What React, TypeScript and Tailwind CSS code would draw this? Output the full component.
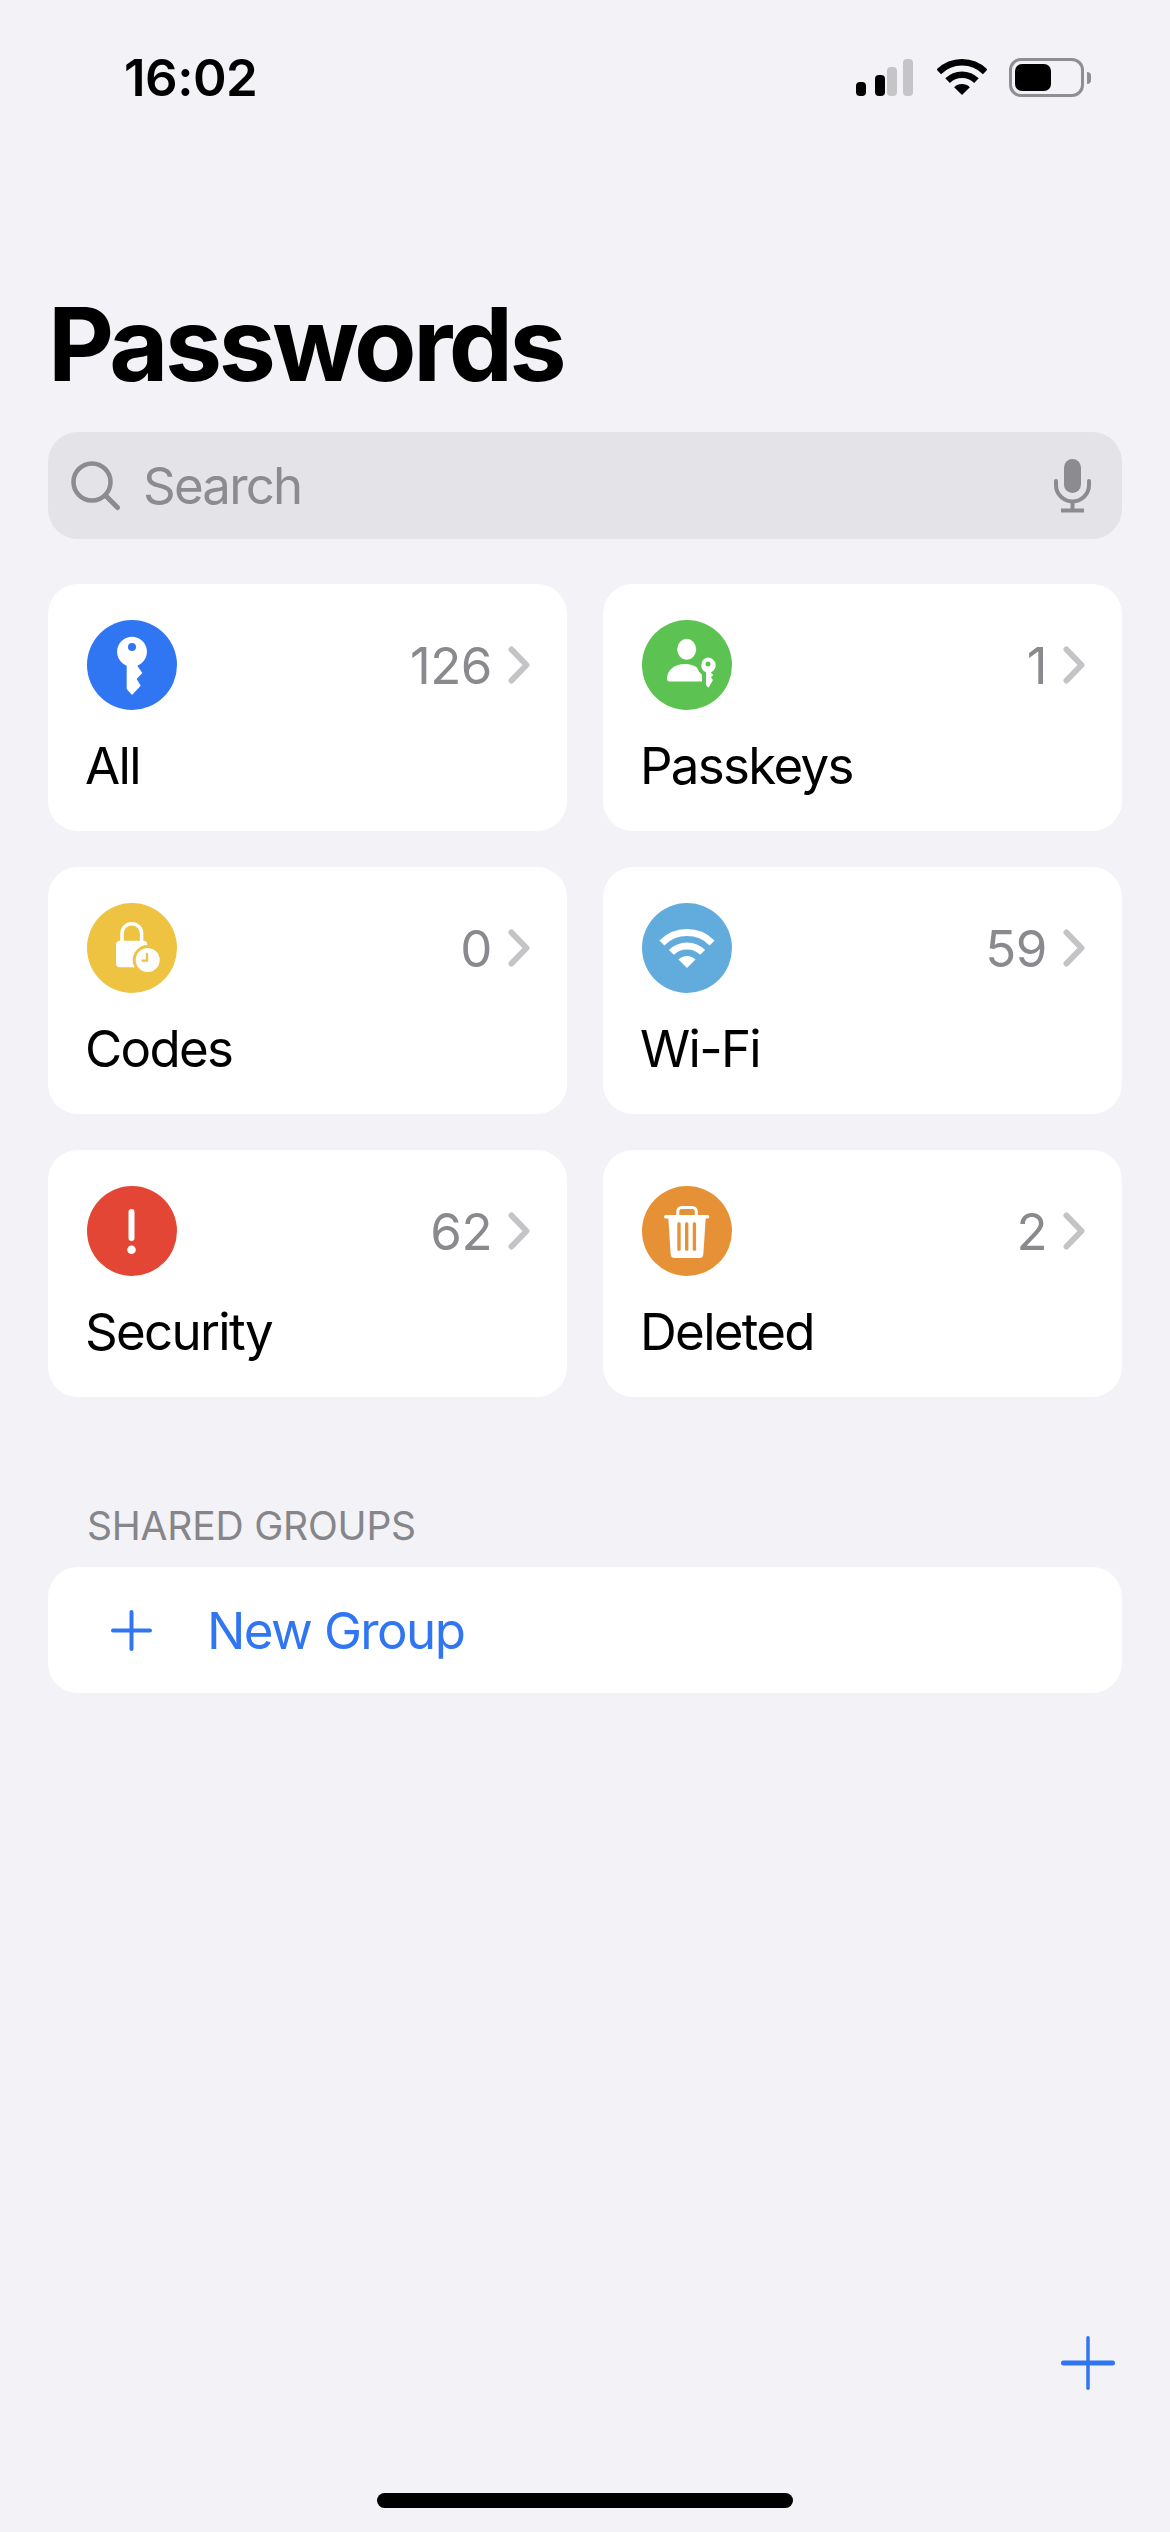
import React from "react";

const font = { fontFamily: "Inter, 'Liberation Sans', sans-serif" };

function Chevron() {
  return (
    <svg width="22" height="38" viewBox="0 0 22 38" fill="none" className="shrink-0">
      <path d="M3.500 3.500 L18.500 19 L3.500 34.500" stroke="#c4c4c7" strokeWidth="6" strokeLinecap="round" strokeLinejoin="round" />
    </svg>
  );
}

function KeyIcon() {
  return (
    <svg width="90" height="90" viewBox="0 0 90 90" className="block">
      <circle cx="45" cy="45" r="45" fill="#3076f3" />
      <path
        fillRule="evenodd"
        fill="#fff"
        d="M45 16.700a15 15 0 0 1 5.300 29L55.300 53 49.700 59 53.700 65.700 45 75 39.700 69V45.700A15 15 0 0 1 45 16.700ZM45 23a4 4 0 1 0 0 8 4 4 0 0 0 0-8Z"
      />
    </svg>
  );
}

function PasskeyIcon() {
  return (
    <svg width="90" height="90" viewBox="0 0 90 90" className="block">
      <circle cx="45" cy="45" r="45" fill="#5cc251" />
      <ellipse cx="44.700" cy="29.300" rx="9.500" ry="10.500" fill="#fff" />
      <path d="M25 58.500C25 50 33 44 43 44c9 0 17.700 5 17.700 14.500v3H27.500C25.800 61.500 25 60.300 25 58.500Z" fill="#fff" />
      <circle cx="66" cy="45.300" r="11" fill="#5cc251" />
      <path d="M62 50h9v14l-4.300 4-4.700-4.500Z" fill="#5cc251" stroke="#5cc251" strokeWidth="4" />
      <path
        fillRule="evenodd"
        fill="#fff"
        d="M66 37.600a7.700 7.700 0 0 1 2.700 14.900L71.200 55 69 57.500 71 60 66.500 67.700 64 65V52.300A7.700 7.700 0 0 1 66 37.600ZM66 41.500a2.500 2.500 0 1 0 0 5 2.500 2.500 0 0 0 0-5Z"
      />
    </svg>
  );
}

function LockIcon() {
  return (
    <svg width="90" height="90" viewBox="0 0 90 90" className="block">
      <circle cx="45" cy="45" r="45" fill="#edc341" />
      <path d="M35 40V30.500a9.800 9.800 0 0 1 19.600 0V40" fill="none" stroke="#fff" strokeWidth="3.500" />
      <rect x="29" y="37.700" width="31.300" height="26.600" rx="4" fill="#fff" />
      <circle cx="60.700" cy="57" r="15" fill="#edc341" />
      <circle cx="60.700" cy="57" r="12" fill="#fff" />
      <path d="M60 50v7.700h-5.500" fill="none" stroke="#edc341" strokeWidth="2.200" />
    </svg>
  );
}

function WifiGlyph({ color, width, height }: { color: string; width: number; height: number }) {
  return (
    <svg width={width} height={height} viewBox="18 26 54 40" className="block">
      <path d="M19.900 39.900A35.500 35.500 0 0 1 70.100 39.900" fill="none" stroke={color} strokeWidth="7" />
      <path d="M29.400 49.400A22 22 0 0 1 60.600 49.400" fill="none" stroke={color} strokeWidth="7" />
      <path d="M45 65 36.500 56.500A12 12 0 0 1 53.500 56.500Z" fill={color} />
    </svg>
  );
}

function WifiIcon() {
  return (
    <svg width="90" height="90" viewBox="0 0 90 90" className="block">
      <circle cx="45" cy="45" r="45" fill="#62acdd" />
      <path d="M19.900 39.900A35.500 35.500 0 0 1 70.100 39.900" fill="none" stroke="#fff" strokeWidth="7" />
      <path d="M29.400 49.400A22 22 0 0 1 60.600 49.400" fill="none" stroke="#fff" strokeWidth="7" />
      <path d="M45 65 36.500 56.500A12 12 0 0 1 53.500 56.500Z" fill="#fff" />
    </svg>
  );
}

function AlertIcon() {
  return (
    <svg width="90" height="90" viewBox="0 0 90 90" className="block">
      <circle cx="45" cy="45" r="45" fill="#e34635" />
      <rect x="41.500" y="23" width="6" height="32" rx="3" fill="#fff" />
      <circle cx="44.500" cy="63.700" r="4.300" fill="#fff" />
    </svg>
  );
}

function TrashIcon() {
  return (
    <svg width="90" height="90" viewBox="0 0 90 90" className="block">
      <circle cx="45" cy="45" r="45" fill="#e79136" />
      <path d="M35.800 30v-4.500a4 4 0 0 1 4-4h10.500a4 4 0 0 1 4 4V30" fill="none" stroke="#fff" strokeWidth="3" />
      <rect x="22" y="29" width="45.300" height="3.400" rx="1.700" fill="#fff" />
      <path d="M26.300 32h37.400l-2.400 36.500a4 4 0 0 1-4 3.500H32.700a4 4 0 0 1-4-3.500Z" fill="#fff" />
      <rect x="35.300" y="36.300" width="3.400" height="28.400" rx="1.500" fill="#e79136" />
      <rect x="43" y="36.300" width="3.400" height="28.400" rx="1.500" fill="#e79136" />
      <rect x="50.700" y="36.300" width="3.400" height="28.400" rx="1.500" fill="#e79136" />
    </svg>
  );
}

const cards = [
  { label: "All", count: "126", icon: <KeyIcon /> },
  { label: "Passkeys", count: "1", icon: <PasskeyIcon /> },
  { label: "Codes", count: "0", icon: <LockIcon /> },
  { label: "Wi-Fi", count: "59", icon: <WifiIcon /> },
  { label: "Security", count: "62", icon: <AlertIcon /> },
  { label: "Deleted", count: "2", icon: <TrashIcon /> },
];

function Plus({ size, stroke, vStroke }: { size: number; stroke: number; vStroke: number }) {
  return (
    <svg width={size} height={size} viewBox={`0 0 ${size} ${size}`} className="block shrink-0" fill="none">
      <path d={`M${size / 2} ${vStroke / 2}V${size - vStroke / 2}`} stroke="#3076f3" strokeWidth={vStroke} strokeLinecap="round" />
      <path d={`M${stroke / 2} ${size / 2}H${size - stroke / 2}`} stroke="#3076f3" strokeWidth={stroke} strokeLinecap="round" />
    </svg>
  );
}

export default function App() {
  return (
    <div className="w-[1170px] h-[2532px] bg-[#f2f2f7] flex flex-col overflow-hidden text-black" style={font}>
      <div className="h-[152px] pl-[124px] pr-[79px] pt-[53px] flex justify-between items-start shrink-0">
        <span className="text-[51px] leading-[50px] font-semibold tracking-[-0.5px]">16:02</span>
        <div className="flex items-start pt-[6px]">
          <div className="flex items-end gap-[9px] h-[37px] w-[58px]">
            <span className="w-[10px] h-[14px] rounded-[4px] bg-black" />
            <span className="w-[10px] h-[21px] rounded-[4px] bg-black" />
            <span className="w-[10px] h-[29px] rounded-[4px] bg-[#c5c5c7] -ml-[7px]" />
            <span className="w-[10px] h-[37px] rounded-[4px] bg-[#c5c5c7] -ml-[3px]" />
          </div>
          <div className="ml-[23px]">
            <WifiGlyph color="#000" width={50} height={37} />
          </div>
          <div className="ml-[22px] flex items-center -mt-px">
            <div className="w-[75px] h-[39px] rounded-[12px] border-[3px] border-[#8e8e93] p-[3px]">
              <div className="w-[36px] h-full rounded-[7px] bg-black" />
            </div>
            <div className="w-[4px] h-[12px] ml-[3px] rounded-r-[4px] bg-[#8e8e93]" />
          </div>
        </div>
      </div>

      <div className="px-[48px] flex flex-col flex-1">
        <h1 className="text-[102px] leading-[124px] font-bold mt-[130px] tracking-[-3.5px]">Passwords</h1>

        <div className="mt-[26px] h-[107px] rounded-[30px] bg-[#e3e3e8] flex items-center pl-[23px] pr-[31px] shrink-0">
          <svg width="50" height="50" viewBox="0 0 50 50" fill="none" className="shrink-0">
            <circle cx="21" cy="21" r="18.500" stroke="#8b8b90" strokeWidth="4.500" />
            <path d="M34.500 34.500 46.500 46.500" stroke="#8b8b90" strokeWidth="5" strokeLinecap="round" />
          </svg>
          <span className="ml-[22px] text-[51px] leading-[61px] text-[#8b8b90] flex-1 tracking-[-1.8px]">Search</span>
          <svg width="37" height="54" viewBox="0 0 37 54" fill="none" className="shrink-0">
            <rect x="10" y="0" width="17" height="34" rx="8.500" fill="#8b8b90" />
            <path d="M2 22v4a16.500 16.500 0 0 0 33 0v-4" stroke="#8b8b90" strokeWidth="4" strokeLinecap="round" />
            <path d="M18.500 43v8M7 51.500h23" stroke="#8b8b90" strokeWidth="4" />
          </svg>
        </div>

        <div className="mt-[45px] grid grid-cols-2 gap-x-[36px] gap-y-[36px] shrink-0">
          {cards.map((c) => (
            <div key={c.label} className="h-[247px] rounded-[30px] bg-white pt-[36px] pl-[37px] pr-[37px]">
              <div className="flex items-center pl-[2px]">
                <div className="shrink-0">{c.icon}</div>
                <span className="ml-auto text-[51px] leading-[61px] text-[#8a8a8e] tracking-[-0.5px]">{c.count}</span>
                <span className="ml-[16px]">
                  <Chevron />
                </span>
              </div>
              <div className="mt-[25px] text-[51px] leading-[61px] tracking-[-1.7px]">{c.label}</div>
            </div>
          ))}
        </div>

        <div className="mt-[105px] pl-[39px] text-[39px] leading-[47px] text-[#85858a] shrink-0 tracking-[-0.2px]">SHARED GROUPS</div>
        <div className="mt-[18px] h-[126px] rounded-[30px] bg-white flex items-center pl-[63px] shrink-0">
          <Plus size={41} stroke={4} vStroke={4} />
          <span className="ml-[55px] text-[51px] leading-[61px] text-[#3076f3] tracking-[-1.6px]">New Group</span>
        </div>

        <div className="mt-auto flex justify-end pr-[7px] shrink-0">
          <Plus size={54} stroke={5} vStroke={3.500} />
        </div>
      </div>

      <div className="h-[142px] shrink-0 flex justify-center pt-[103px]">
        <div className="w-[416px] h-[15px] rounded-full bg-black" />
      </div>
    </div>
  );
}
